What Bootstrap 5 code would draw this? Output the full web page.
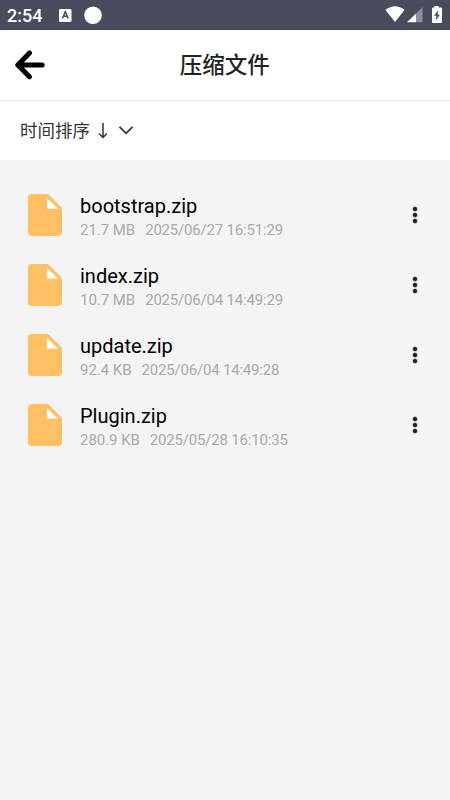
<!DOCTYPE html>
<html lang="zh-CN">
<head>
<meta charset="utf-8">
<meta name="viewport" content="width=device-width, initial-scale=1">
<title>压缩文件</title>
<link href="https://cdn.jsdelivr.net/npm/bootstrap@5.3.0/dist/css/bootstrap.min.css" rel="stylesheet">
<style>
body { font-family: Roboto, "Noto Sans CJK SC", sans-serif; background: #f4f4f4; min-height: 100vh; }
svg { display: block; flex: none; }
.status-bar { height: 30px; background: #484c5d; padding: 0 8px 0 7px; }
.clock { font-size: 18px; font-weight: 500; line-height: 30px; width: 52px; padding-top: 1px; }
.title-bar { height: 71px; border-bottom: 1px solid #e8e8e8; padding: 0 15px 0 14.5px; }
.title-bar h1 { font-size: 22.5px; font-weight: 500; color: #222; line-height: 30px; }
.side { width: 30px; }
.sort-bar { height: 59px; padding-left: 20px; color: #333; font-size: 17.5px; }
.sort-bar span { padding-top: 2px; }
.files { padding: 20px 28px 0; }
.file-row { height: 70px; }
.file-name { font-size: 20px; line-height: 24px; color: #000; }
.file-info { font-size: 15px; line-height: 20px; color: #aaa; gap: 10px; margin-top: 2px; letter-spacing: -.04px; }
.file-info .stamp { letter-spacing: -.19px; }
.texts { margin-left: 18px; padding-top: 3px; }
</style>
<script src="https://cdn.jsdelivr.net/npm/bootstrap@5.3.0/dist/js/bootstrap.bundle.min.js"></script>
</head>
<body>
<svg width="0" height="0" class="d-none">
  <symbol id="file" viewBox="0 0 34 42"><path fill="#ffc063" d="M4 0H20L34 14V38a4 4 0 0 1-4 4H4a4 4 0 0 1-4-4V4a4 4 0 0 1 4-4z"/><path fill="#fff" d="M19 4V14.7H30z"/></symbol>
  <symbol id="dots" viewBox="0 0 6 18"><g fill="#1c1c1c" stroke="#fff" stroke-width=".5"><circle cx="3" cy="3" r="2.5"/><circle cx="3" cy="9" r="2.5"/><circle cx="3" cy="15" r="2.5"/></g></symbol>
</svg>
<header class="status-bar d-flex align-items-center text-white">
  <div class="clock">2:54</div>
  <svg width="44" height="20" viewBox="0 0 44 20"><rect y="4" width="12.5" height="13" rx="1.5" fill="#fff"/><path d="M3.4 13.5 6.3 6.6 9.2 13.5M4.4 11.2H8.2" fill="none" stroke="#484c5d" stroke-width="1.5"/><circle cx="34" cy="10.3" r="8.8" fill="#fff"/></svg>
  <svg class="ms-auto" width="57" height="20" viewBox="0 0 57 20"><path fill="#fff" d="M.5 5Q10 -2.5 19.5 5L10 17z"/><path fill="#8c8f9b" d="M37.5 2V17.2H31V8.5z"/><path fill="#fff" d="M22 17.2 31 8.5V17.2z"/><path fill="#fff" d="M49.3 1h4.4v1.5h2.3a1 1 0 0 1 1 1V17a1 1 0 0 1-1 1h-8a1 1 0 0 1-1-1V3.5a1 1 0 0 1 1-1h1.3z"/><path fill="#484c5d" d="M53.3 5 49.1 10.8H51.5L50.7 15.5 54.9 9.7H52.5z"/></svg>
</header>
<nav class="title-bar d-flex align-items-center justify-content-between bg-white">
  <svg width="30" height="30" viewBox="0 0 30 30" fill="none" stroke="#000" stroke-width="5" stroke-linecap="round" stroke-linejoin="round"><path d="M14.5 3 2.8 15 14.5 26.7M3 15H27.2"/></svg>
  <h1 class="m-0">压缩文件</h1>
  <div class="side"></div>
</nav>
<div class="sort-bar d-flex align-items-center bg-white">
  <span>时间排序</span>
  <svg class="ms-2" width="38" height="18" viewBox="0 0 38 18" fill="none" stroke="#333" stroke-width="1.5"><path d="M5 1V15.5M1 11.5 5 15.5 9 11.5"/><path stroke-width="1.8" d="M21.5 4.8 28 11.3 34.5 4.8"/></svg>
</div>
<main class="files">
  <div class="file-row d-flex align-items-center"><svg width="34" height="42"><use href="#file"/></svg><div class="texts"><div class="file-name">bootstrap.zip</div><div class="file-info d-flex"><span>21.7 MB</span><span class="stamp">2025/06/27 16:51:29</span></div></div><svg class="ms-auto me-1" width="6" height="18"><use href="#dots"/></svg></div>
  <div class="file-row d-flex align-items-center"><svg width="34" height="42"><use href="#file"/></svg><div class="texts"><div class="file-name">index.zip</div><div class="file-info d-flex"><span>10.7 MB</span><span class="stamp">2025/06/04 14:49:29</span></div></div><svg class="ms-auto me-1" width="6" height="18"><use href="#dots"/></svg></div>
  <div class="file-row d-flex align-items-center"><svg width="34" height="42"><use href="#file"/></svg><div class="texts"><div class="file-name">update.zip</div><div class="file-info d-flex"><span>92.4 KB</span><span class="stamp">2025/06/04 14:49:28</span></div></div><svg class="ms-auto me-1" width="6" height="18"><use href="#dots"/></svg></div>
  <div class="file-row d-flex align-items-center"><svg width="34" height="42"><use href="#file"/></svg><div class="texts"><div class="file-name">Plugin.zip</div><div class="file-info d-flex"><span>280.9 KB</span><span class="stamp">2025/05/28 16:10:35</span></div></div><svg class="ms-auto me-1" width="6" height="18"><use href="#dots"/></svg></div>
</main>
</body>
</html>
